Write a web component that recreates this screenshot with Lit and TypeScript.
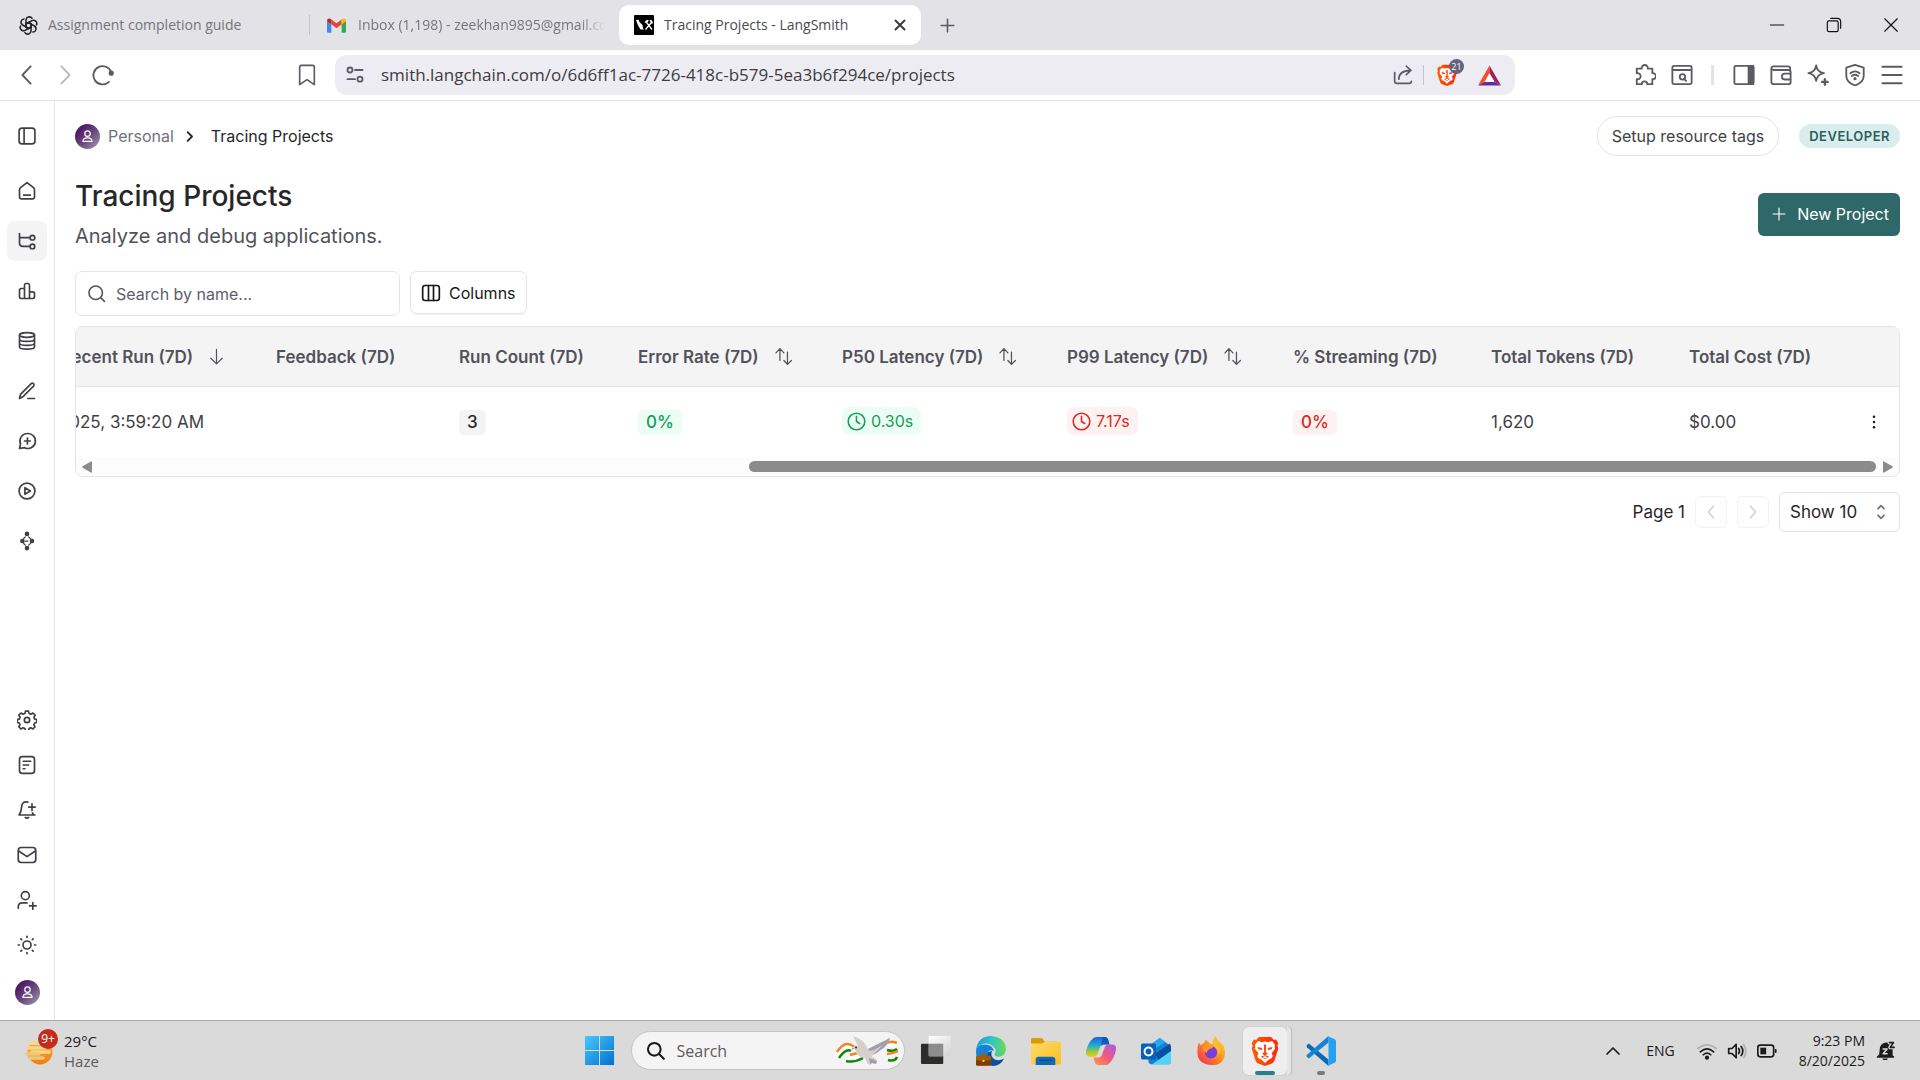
import { LitElement, html, css, svg, nothing, TemplateResult } from "lit";
import { customElement } from "lit/decorators.js";

/* Outline icon on a 24-unit grid. */
const icon = (body: unknown, size = 22, stroke = 2) => html`<svg
  width=${size} height=${size} viewBox="0 0 24 24" fill="none" stroke="currentColor"
  stroke-width=${stroke} stroke-linecap="round" stroke-linejoin="round" aria-hidden="true">${body}</svg>`;

/* Filled artwork on a 32-unit grid. */
const art = (body: unknown, size = 30, box = "0 0 32 32") => html`<svg
  width=${size} height=${size} viewBox=${box} aria-hidden="true">${body}</svg>`;

const lion = (id: string) => svg`
  <defs><linearGradient id=${id} x1="0" x2="1"><stop offset="0" stop-color="#ff5a00"/><stop offset="1" stop-color="#ff2a10"/></linearGradient></defs>
  <path fill="url(#${id})" d="M9.500 1h13l3 3.200 2.400-.4 2.300 3.800-1 2.600 1 3-4.200 13.200q-.6 1.600-2 2.600L16 32l-8-3q-1.400-1-2-2.600L1.800 13.200l1-3-1-2.600L4.100 3.800l2.400.4z"/>
  <path fill="#fff" d="M16 5.800l3.400.9 4.100-1.300 3.300 4.200-.6 2.100.7 1.700-3.900 5 1.200 2.700-.6 2.200-3.900 1.900-3.700 3.600-3.700-3.600-3.900-1.900-.6-2.200L9 18.400l-3.900-5 .7-1.700-.6-2.100 3.300-4.200 4.100 1.300z"/>
  <path fill="#ff4214" d="M8 11.600l5.200 1.200-.6 2.200-3.600-.8zM24 11.600l-5.200 1.200.6 2.200 3.600-.8zM14.700 9h2.600l-.4 8.200 2.300 1.800-3.200 1.900-3.200-1.900 2.300-1.800zM11.500 21.800l4.500-1.400 4.500 1.400-4.500 3z"/>
  <path fill="#fff" d="M13.600 22.400l2.400-.8 2.400.8-2.400 1.600z"/>`;

const person = svg`<circle cx="12" cy="8" r="3.800"/><path d="M5.500 19c0-3.400 2.800-5.200 6.500-5.200s6.500 1.800 6.500 5.200z"/>`;

const avatarStyle = css`
  .avatar {
    display: inline-flex; align-items: center; justify-content: center;
    width: 25px; height: 25px; border-radius: 50%; color: #fff; flex: none;
    background: linear-gradient(135deg, #4f1a68 20%, #6b4b7e 55%, #a79fae 100%);
  }`;

const base = css`
  :host, * { box-sizing: border-box; }
  button, input, select { font: inherit; color: inherit; margin: 0; padding: 0; border: 0; background: none; outline: none; }
  a { color: inherit; text-decoration: none; }
  svg { display: block; flex: none; }
`;

@customElement("browser-chrome")
export class BrowserChrome extends LitElement {
  static styles = [base, css`
    :host { display: block; font-family: "Noto Sans", "Open Sans", sans-serif; color: #5b5c63; }
    .tabs { display: flex; align-items: center; height: 50px; background: #e3e2e7; padding: 0 15px 0 9px; }
    .tab { display: flex; align-items: center; gap: 10px; height: 40px; font: 14px/20px "Open Sans", sans-serif; color: #75757c; padding: 0 10px; flex: 0 1 auto; }
    .tab.first { width: 300px; }
    .tab.first svg { color: #222226; }
    .tab.mail { width: 309px; padding: 0 14px 0 17px; gap: 12px; }
    .tab.active { width: 302px; background: #fff; border-radius: 10px; color: #4a4b52; padding: 0 12px 0 15px; }
    .split { width: 1px; height: 20px; background: #c4c3c9; }
    .title { flex: 1; white-space: nowrap; overflow: hidden; }
    .mail .title { mask-image: linear-gradient(90deg, #000 90%, transparent); }
    .close { color: #36373c; display: flex; }
    .new { margin-left: 17px; display: flex; }
    .window { margin-left: auto; display: flex; gap: 37px; color: #111; align-items: center; padding-right: 4px; }
    .bar { display: flex; align-items: center; height: 51px; background: #fff; border-bottom: 1px solid #e3e2e7; }
    .left { width: 335px; display: flex; gap: 2px; padding: 0 10px 0 9px; }
    .right { width: 405px; display: flex; gap: 1px; justify-content: flex-end; align-items: center; padding-right: 10px; }
    .ib { width: 36px; height: 36px; display: flex; align-items: center; justify-content: center; }
    .ib.off { color: #b9b9be; }
    .ib.mark { margin-left: auto; }
    .url { flex: 1; height: 40px; display: flex; align-items: center; background: #edecf2; border-radius: 12px; padding: 0 14px 0 10px; }
    .url form { flex: 1; display: flex; margin: 0 16px; }
    .url input { width: 100%; font: 17px/24px "Open Sans", sans-serif; color: #3c3c42; }
    .sep { width: 1px; height: 20px; background: #c4c3c9; margin: 0 12px 0 10px; }
    .sep.wide { width: 3px; background: #e3e2e7; margin: 0 11px 0 10px; }
    .shield { position: relative; margin-right: 20px; }
    .count { position: absolute; left: 13px; top: -5px; width: 15px; height: 15px; border-radius: 50%; background: #63657a; color: #fff; font: 9px/15px "Open Sans", sans-serif; text-align: center; }
  `];

  render() {
    return html`
      <div class="tabs">
        <div class="tab first">
          ${icon(svg`${[0, 60, 120, 180, 240, 300].map(a => svg`<path transform="rotate(${a} 12 12)" d="M12 8.200L8.800 10V5.200a4.200 4.200 0 0 1 7.600-2.300M12 8.200l3.300 1.900"/>`)}`, 19, 1.900)}
          <span class="title">Assignment completion guide</span>
        </div>
        <span class="split"></span>
        <div class="tab mail">
          <svg width="19" height="15" viewBox="0 0 24 18" aria-hidden="true">
            <path fill="#4285f4" d="M0 3v13.500Q0 18 1.600 18H5.500V7z"/><path fill="#34a853" d="M24 3v13.500q0 1.500-1.600 1.500H18.500V7z"/>
            <path fill="#ea4335" d="M5.500 7.500V1.400L12 6.300l6.500-4.900v6.100L12 12.400z"/>
            <path fill="#c5221f" d="M0 3Q0 0 2.600 0 4 .2 5.500 1.400v6.100L0 3.400z"/><path fill="#fbbc04" d="M24 3q0-3-2.600-3-1.400.2-2.900 1.400v6.100L24 3.400z"/>
          </svg>
          <span class="title">Inbox (1,198) - zeekhan9895@gmail.com</span>
        </div>
        <div class="tab active">
          <svg width="20" height="20" viewBox="0 0 20 20" aria-hidden="true"><rect width="20" height="20" rx="1"/>
            <path fill="#fff" d="M2 5l2.500-.3 1 2.300 3 3 .5 3.500 1 1H6.500L3.800 10z"/>
            <path stroke="#fff" stroke-width="1.300" d="M11.500 14.500l6-7M13 8l5 6.500"/><path fill="#fff" d="M10.500 7l2.500-2.300 2 .8-2.500 3zM15.500 5h2l1.800 3.200-2 .3z"/></svg>
          <span class="title">Tracing Projects - LangSmith</span>
          <button class="close" aria-label="Close tab">${icon(svg`<path d="M6 6l12 12M18 6L6 18"/>`, 18, 2.500)}</button>
        </div>
        <button class="new" aria-label="New tab">${icon(svg`<path d="M12 4v16M4 12h16"/>`, 19, 2)}</button>
        <div class="window">
          <button aria-label="Minimize">${icon(svg`<path d="M4 12h16"/>`, 20, 1.300)}</button>
          <button aria-label="Restore">${icon(svg`<rect x="4" y="7" width="13" height="13" rx="2"/><path d="M8 4h8q4 0 4 4v8"/>`, 20, 1.400)}</button>
          <button aria-label="Close window">${icon(svg`<path d="M4.500 4.500l15 15M19.500 4.500l-15 15"/>`, 20, 1.400)}</button>
        </div>
      </div>
      <div class="bar">
        <div class="left">
          <button class="ib" aria-label="Back">${icon(svg`<path d="M16 2.500L7 12l9 9.500"/>`)}</button>
          <button class="ib off" aria-label="Forward">${icon(svg`<path d="M8 2.500l9 9.500-9 9.500"/>`)}</button>
          <button class="ib" aria-label="Reload">${icon(svg`<path d="M18.500 19.500A10 10 0 1 1 21 9"/><circle cx="21" cy="10" r="1.800" fill="currentColor"/>`)}</button>
          <button class="ib mark" aria-label="Bookmark">${icon(svg`<path d="M4 3.500Q4 1.500 6 1.500h12q2 0 2 2v19L12 17l-8 5.500z"/>`, 22, 1.800)}</button>
        </div>
        <div class="url">
          ${icon(svg`<circle cx="6" cy="6" r="3"/><path d="M12 6h9M3 17h9"/><circle cx="18" cy="17" r="3"/>`, 20, 2.200)}
          <form><input aria-label="Address" value="smith.langchain.com/o/6d6ff1ac-7726-418c-b579-5ea3b6f294ce/projects" /></form>
          ${icon(svg`<path d="M2 9v10.500Q2 22 4.500 22h15q2.500 0 2.500-2.500M7 17q0-10 14-10.500M16 1.500l5.500 5-5.500 5"/>`, 20, 2)}
          <span class="sep"></span>
          <span class="shield">${art(lion("lionbar"), 22)}<span class="count">21</span></span>
          ${art(svg`<path fill="#ff4724" d="M16 2L0 30l9-5 7-12z"/><path fill="#9e1f63" d="M16 2l16 28-9-5-7-12z"/><path fill="#662d91" d="M0 30h32l-9-5H9z"/><path fill="#fff" d="M16 13l7 12H9z"/>`, 23)}
        </div>
        <div class="right">
          <button class="ib" aria-label="Extensions">${icon(svg`<path d="M3 5h5.500a3.300 3.300 0 1 1 6.500 0H20v5a3.300 3.300 0 1 1 0 6.500V22h-5.500a3 3 0 1 0-6 0H3v-5.500a3.300 3.300 0 1 0 0-6.300z"/>`, 22)}</button>
          <button class="ib" aria-label="Search tabs">${icon(svg`<rect x="1.500" y="2" width="21" height="20" rx="2"/><path d="M2 6.500h20M14.500 16.500l2 2"/><circle cx="12.500" cy="14" r="3"/>`)}</button>
          <span class="sep wide"></span>
          <button class="ib" aria-label="Side panel">${icon(svg`<rect x="1.500" y="2" width="21" height="20" rx="1.500"/><path fill="currentColor" d="M17 2h5v20h-5z"/>`)}</button>
          <button class="ib" aria-label="Wallet">${icon(svg`<path d="M22 8V5Q22 2.500 19.500 2.500H4Q1.500 2.500 1.500 5v14Q1.500 22 4 22h16q2.500 0 2.500-2.500V8.500Q22 6.500 20 6.500H4Q2 6.500 1.500 5M22 10.500h-6q-3 0-3 3.200t3 3.200h6"/>`)}</button>
          <button class="ib" aria-label="Assistant">${icon(svg`<path d="M10 1.500q1 7.500 8.500 8.500-7.500 1-8.500 8.500Q9 11 1.500 10 9 9 10 1.500z"/><path d="M19.500 16.500v6M16.500 19.500h6" stroke-width="2.600"/>`)}</button>
          <button class="ib" aria-label="VPN">${icon(svg`<path d="M12 1l9.500 3v9q0 6.500-9.500 10.500Q2.500 19.500 2.500 13V4z"/><path d="M7 10q5-4 10 0M8.500 13q3.500-2.500 7 0"/><circle cx="12" cy="16" r=".8"/>`)}</button>
          <button class="ib" aria-label="Menu">${icon(svg`<path d="M1.500 3h21M1.500 12h21M1.500 21h21"/>`)}</button>
        </div>
      </div>`;
  }
}

const topNav: [string, TemplateResult][] = [
  ["Home", svg`<path d="M3 10.500Q3 9 4.200 8L12 2l7.800 6Q21 9 21 10.500V19q0 2.500-2.500 2.500h-13Q3 21.500 3 19zM8 17h8"/>`],
  ["Tracing", svg`<path d="M3 3v11.500Q3 18.500 7 18.500h8M3 8h12"/><circle cx="18.500" cy="8" r="2.800"/><circle cx="18.500" cy="18.500" r="2.800"/>`],
  ["Monitoring", svg`<path d="M9 21V5q0-2 1.500-2h3Q15 3 15 5v16M9 9H5Q3 9 3 11v8q0 2 2 2h14q2 0 2-2v-4q0-2-2-2h-4"/>`],
  ["Datasets", svg`<ellipse cx="12" cy="4.800" rx="9" ry="2.800"/><path d="M3 5v14c0 1.600 4 2.800 9 2.800s9-1.200 9-2.800V5M3 9.700c0 1.600 4 2.800 9 2.800s9-1.200 9-2.800M3 14.400c0 1.600 4 2.800 9 2.800s9-1.200 9-2.800"/>`],
  ["Annotation", svg`<path d="M3 21l1.200-5L17 3.200q1.400-1.200 2.800 0 1.400 1.500 0 3L7.500 18.500zM13 21h8"/>`],
  ["Prompts", svg`<path d="M12.500 3A9 9 0 1 1 9 20l-6 1 1.200-5.500A9 9 0 0 1 12.500 3zM12.500 8.500v7M9 12h7"/>`],
  ["Playground", svg`<circle cx="12" cy="12" r="9.500"/><path d="M9.500 8v8l6.500-4z"/>`],
  ["Graph", svg`<g fill="currentColor"><circle cx="12" cy="3.500" r="1.800"/><circle cx="12" cy="20.500" r="1.800"/><circle cx="6.500" cy="12" r="1.800"/><circle cx="18" cy="12" r="1.800"/></g><path d="M10 7L8 9M14 7l2.500 2.500M10 17l-2-2M14 17l2.500-2.500M10 12h3" stroke-width="1.500"/>`],
];
const spokes = Array.from({ length: 8 }, (_, i) => i * 45);
const bottomNav: [string, TemplateResult][] = [
  ["Settings", svg`<circle cx="12" cy="12" r="3.200"/><path d="M10.200 1.300h3.600l.7 2.900 2.200.9 2.500-1.500 2.600 2.600-1.500 2.500.9 2.200 2.600.7v3.200l-2.700.8-.9 2.100 1.400 2.600-2.500 2.500-2.500-1.400-2.200.9-.6 2.700h-3.600l-.7-2.700-2.200-.9-2.500 1.400-2.600-2.600 1.400-2.500-.9-2-2.400-.9v-3.200l2.500-.7.9-2.200-1.500-2.500 2.600-2.600 2.500 1.500 2.200-.9z"/>`],
  ["Docs", svg`<rect x="3" y="2" width="18" height="20" rx="3.500"/><path d="M7.500 7.500h9M7.500 12h6.500M7.500 16.500h2"/>`],
  ["Notifications", svg`<path d="M13 2.500q-7-1.500-7.500 6-.2 5.500-3 9.500h19M10 21q2 1.500 4 0M18 4.500v8M14 8.500h8M18.500 15.500l1.500 2"/>`],
  ["Inbox", svg`<rect x="1.500" y="3" width="21" height="18" rx="3.500"/><path d="M2.500 7.500L12 14l9.500-6.500"/>`],
  ["Invite", svg`<circle cx="10" cy="6.800" r="4.800"/><path d="M1.500 22v-1.500q0-5 5-5H12M19 15v8M15 19h8"/>`],
  ["Theme", svg`<circle cx="12" cy="12" r="4.800"/>${spokes.map(a => svg`<path transform="rotate(${a} 12 12)" d="M12 1.500v1.500"/>`)}`],
];

@customElement("app-sidebar")
export class AppSidebar extends LitElement {
  static styles = [base, avatarStyle, css`
    :host { display: flex; flex-direction: column; justify-content: space-between; width: 55px; flex: none; border-right: 1px solid #e4e4e7; padding: 15px 7px 8px; color: #3f3f46; }
    nav { display: flex; flex-direction: column; gap: 10px; }
    nav.foot { gap: 5px; }
    .item { width: 40px; height: 40px; display: flex; align-items: center; justify-content: center; border-radius: 8px; }
    .item.on { background: #f4f4f5; }
    .toggle { margin-bottom: 5px; }
    .me { margin-top: 2px; }
  `];
  render() {
    return html`
      <nav aria-label="Main">
        <button class="item toggle" aria-label="Toggle sidebar">${icon(svg`<rect x="2.500" y="2.500" width="19" height="19" rx="3.500"/><path d="M8.500 3v18"/>`, 20)}</button>
        ${topNav.map(([name, body]) => html`<a class="item ${name === "Tracing" ? "on" : ""}" href="#" aria-label=${name}>${icon(body, 20)}</a>`)}
      </nav>
      <nav class="foot" aria-label="Account">
        ${bottomNav.map(([name, body]) => html`<a class="item" href="#" aria-label=${name}>${icon(body, 20)}</a>`)}
        <button class="item me" aria-label="Profile"><span class="avatar">${icon(person, 17, 1.700)}</span></button>
      </nav>`;
  }
}

type Column = { label: string; width: number; sort?: "desc" | "both"; cell: unknown };
const clock = icon(svg`<circle cx="12" cy="12" r="10.500"/><path d="M12 5.500V12l4 2.500"/>`, 19);
const columns: Column[] = [
  { label: "Most Recent Run (7D)", width: 261, sort: "desc", cell: "8/20/2025, 3:59:20 AM" },
  { label: "Feedback (7D)", width: 183, cell: nothing },
  { label: "Run Count (7D)", width: 179, cell: html`<span class="pill gray">3</span>` },
  { label: "Error Rate (7D)", width: 204, sort: "both", cell: html`<span class="pill green">0%</span>` },
  { label: "P50 Latency (7D)", width: 225, sort: "both", cell: html`<span class="pill time green">${clock}0.30s</span>` },
  { label: "P99 Latency (7D)", width: 226, sort: "both", cell: html`<span class="pill time red">${clock}7.17s</span>` },
  { label: "% Streaming (7D)", width: 198, cell: html`<span class="pill red">0%</span>` },
  { label: "Total Tokens (7D)", width: 198, cell: "1,620" },
  { label: "Total Cost (7D)", width: 179, cell: "$0.00" },
];

@customElement("projects-page")
export class ProjectsPage extends LitElement {
  static styles = [base, avatarStyle, css`
    :host { display: block; flex: 1; min-width: 0; padding: 15px 20px; font: 17px/24px Inter, sans-serif; color: #27272a; }
    .row { display: flex; align-items: center; }
    .crumbs { height: 40px; font-size: 16px; gap: 8px; }
    .crumbs .muted { color: #71717a; }
    .crumbs .here { margin-left: 6px; }
    .tags { margin-left: auto; height: 40px; padding: 0 14px; border: 1px solid #e4e4e7; border-radius: 20px; color: #3f3f46; }
    .plan { margin-left: 12px; height: 24px; border-radius: 12px; padding: 0 10px; background: #d9eeec; color: #2b5f5f; font: 600 13px/24px Inter, sans-serif; letter-spacing: 0.5px; }
    .head { margin-top: 22px; justify-content: space-between; }
    h1 { margin: 0; font: 500 28px/36px Inter, sans-serif; }
    .sub { margin: 8px 0 0; font-size: 20px; line-height: 28px; color: #52525b; }
    .new { display: flex; align-items: center; gap: 10px; height: 43px; padding: 0 11px 0 13px; background: #2f6868; color: #fff; border-radius: 6px; font-size: 16px; }
    .tools { margin-top: 21px; gap: 10px; align-items: flex-start; }
    .search { display: flex; align-items: center; gap: 10px; width: 325px; height: 45px; border: 1px solid #e4e4e7; border-radius: 7px; padding: 0 11px; color: #52525b; }
    .search input { flex: 1; min-width: 0; font-size: 16px; }
    .search input::placeholder { color: #60606a; opacity: 1; }
    .cols { display: flex; align-items: center; gap: 8px; height: 43px; padding: 0 10px; border: 1px solid #e4e4e7; border-radius: 7px; box-shadow: 0 1px 2px #0000000d; color: #18181b; font-size: 16px; }
    .card { margin-top: 10px; border: 1px solid #e4e4e7; border-radius: 8px; overflow: hidden; }
    .scroller { display: flex; justify-content: flex-end; overflow: hidden; }
    table { border-collapse: separate; border-spacing: 0; table-layout: fixed; width: 1904px; flex: none; }
    th { height: 60px; padding: 0 20px; text-align: left; font-weight: 600; color: #52525b; white-space: nowrap; border-bottom: 1px solid #e4e4e7; background: #f4f4f5; }
    th .lab { display: inline-flex; align-items: center; gap: 15px; }
    td { height: 70px; padding: 0 20px; white-space: nowrap; color: #3f3f46; }
    td.act { padding: 0; }
    .more { display: flex; margin: 0 auto; color: #18181b; }
    .pill { display: inline-flex; align-items: center; gap: 5px; height: 25px; padding: 0 8px; border-radius: 5px; font-weight: 500; }
    .pill.time { height: 28px; padding: 0 8px 0 5px; border-radius: 7px; font-weight: 400; font-size: 16px; }
    .gray { background: #f4f4f5; color: #27272a; }
    .green { background: #ecfdf3; color: #12a05a; }
    .red { background: #fef1f1; color: #d92d20; }
    .track { display: flex; align-items: center; gap: 7px; height: 19px; padding: 0 6px; background: #fcfcfc; }
    .rail { flex: 1; display: flex; justify-content: flex-end; }
    .thumb { width: 63.4%; height: 11px; border-radius: 6px; background: #8b8b8b; }
    .pager { margin-top: 15px; justify-content: flex-end; gap: 10px; }
    .step { width: 32px; height: 32px; display: flex; align-items: center; justify-content: center; border: 1px solid #f1f1f3; border-radius: 6px; color: #cfcfd4; }
    .size { position: relative; display: flex; align-items: center; }
    .size select { appearance: none; width: 121px; height: 40px; border: 1px solid #e4e4e7; border-radius: 6px; padding: 0 10px; }
    .size svg { position: absolute; right: 10px; color: #71717a; pointer-events: none; }
  `];

  private sortIcon(kind?: "desc" | "both") {
    if (kind === "desc") return icon(svg`<path d="M12 2v20M4 14.500l8 8 8-8"/>`, 17, 1.700);
    if (kind === "both") return icon(svg`<path d="M7.500 17V2.500M2.500 7.500l5-5.500 5 5.500M17 6.500v15M12.500 17l4.500 5 5-5"/>`, 19, 1.600);
    return nothing;
  }

  render() {
    return html`
      <header class="row crumbs">
        <span class="avatar">${icon(person, 17, 1.700)}</span>
        <a class="muted" href="#">Personal</a>
        ${icon(svg`<path d="M9 5l7 7-7 7"/>`, 15, 3)}
        <a class="here" href="#">Tracing Projects</a>
        <button class="tags">Setup resource tags</button>
        <span class="plan">DEVELOPER</span>
      </header>
      <div class="row head">
        <div><h1>Tracing Projects</h1><p class="sub">Analyze and debug applications.</p></div>
        <button class="new">${icon(svg`<path d="M12 3v18M3 12h18"/>`, 16, 1.700)}New Project</button>
      </div>
      <div class="row tools">
        <label class="search">${icon(svg`<circle cx="11" cy="11" r="8.500"/><path d="M17.500 17.500L22 22"/>`, 19)}<input type="search" aria-label="Search by name" placeholder="Search by name..." /></label>
        <button class="cols">${icon(svg`<rect x="2" y="3" width="20" height="18" rx="3"/><path d="M9 3v18M15 3v18"/>`, 20)}Columns</button>
      </div>
      <section class="card">
        <div class="scroller">
          <table>
            <colgroup>${columns.map(c => html`<col style="width:${c.width}px" />`)}<col /></colgroup>
            <thead><tr>${columns.map(c => html`<th scope="col"><span class="lab">${c.label}${this.sortIcon(c.sort)}</span></th>`)}<th></th></tr></thead>
            <tbody><tr>${columns.map(c => html`<td>${c.cell}</td>`)}<td class="act"><button class="more" aria-label="Row actions">${icon(svg`<g fill="currentColor" stroke="none"><circle cx="12" cy="4" r="1.900"/><circle cx="12" cy="12" r="1.900"/><circle cx="12" cy="20" r="1.900"/></g>`, 16)}</button></td></tr></tbody>
          </table>
        </div>
        <div class="track">
          <svg width="10" height="12" viewBox="0 0 10 12" aria-hidden="true"><path fill="#8b8b8b" d="M10 1v10q0 1-1 .6L1 7Q-.5 6 1 5L9 .4Q10 0 10 1z"/></svg>
          <div class="rail"><div class="thumb"></div></div>
          <svg width="10" height="12" viewBox="0 0 10 12" aria-hidden="true"><path fill="#8b8b8b" d="M0 1v10q0 1 1 .6L9 7q1.500-1 0-2L1 .4Q0 0 0 1z"/></svg>
        </div>
      </section>
      <div class="row pager">
        <span>Page 1</span>
        <button class="step" aria-label="Previous page">${icon(svg`<path d="M15.500 4l-7 8 7 8"/>`, 18)}</button>
        <button class="step" aria-label="Next page">${icon(svg`<path d="M8.500 4l7 8-7 8"/>`, 18)}</button>
        <span class="size"><select aria-label="Page size"><option>Show 10</option></select>
          ${icon(svg`<path d="M8 7.500l4-4 4 4M8 16.500l4 4 4-4"/>`, 18, 2.200)}</span>
      </div>`;
  }
}

@customElement("task-bar")
export class TaskBar extends LitElement {
  static styles = [base, css`
    :host { display: grid; grid-template-columns: 1fr auto 1fr; align-items: center; height: 60px; border-top: 1px solid #a9a9a9; background: #dadada; font: 15px/20px "Open Sans", sans-serif; color: #1b1b1b; }
    .weather { display: flex; align-items: center; gap: 4px; padding-left: 24px; text-align: left; }
    .sun { position: relative; width: 36px; height: 40px; display: flex; align-items: center; }
    .nine { position: absolute; left: 14px; top: -2px; width: 20px; height: 20px; border-radius: 50%; background: #c42b1c; color: #fff; font: 12px/19px "Open Sans", sans-serif; text-align: center; }
    .dim { color: #5c5c5c; }
    .apps { display: flex; align-items: center; gap: 7px; height: 59px; }
    .app { width: 48px; height: 48px; display: flex; align-items: center; justify-content: center; position: relative; border-radius: 5px; }
    .app.on { background: #eeeeee; box-shadow: 0 0 1px #999; width: 44px; margin: 0 3px 0 1px; }
    .app.on::after, .app.run::after { content: ""; position: absolute; bottom: 0; height: 4px; border-radius: 2px; background: #267f90; width: 20px; }
    .app.on::before { content: ""; position: absolute; right: -4px; top: 0; width: 4px; height: 48px; border-radius: 0 5px 5px 0; background: #e6e6e6; box-shadow: 1px 0 1px #bbb; }
    .app.run::after { width: 8px; background: #7a7a7a; }
    .find { display: flex; align-items: center; gap: 12px; width: 274px; height: 39px; border-radius: 20px; border: 1px solid #c4c4c4; background: #f4f4f4; padding: 0 5px 0 14px; }
    .find input { flex: 1; min-width: 0; font-size: 16px; }
    .find input::placeholder { color: #5c5c5c; opacity: 1; }
    .tray { display: flex; align-items: center; justify-content: flex-end; padding-right: 25px; }
    .tray .lang { font-size: 14px; margin: 0 22px 0 24px; }
    .sys { display: flex; gap: 10px; margin-right: 22px; }
    .time { text-align: right; margin-right: 11px; font-size: 14px; }
  `];

  render() {
    return html`
      <button class="weather">
        <span class="sun"><svg width="30" height="30" viewBox="0 0 30 30" aria-hidden="true">
          <defs><linearGradient id="wx" x1="0" y1="0" x2="0" y2="1"><stop offset="0" stop-color="#fbb040"/><stop offset="1" stop-color="#f07d12"/></linearGradient></defs>
          <circle cx="16" cy="16" r="12.500" fill="url(#wx)"/><path fill="#dadada" d="M0 0h19v9H0z"/>
          <g stroke-linecap="round" stroke-width="3.500"><path stroke="#fbd98a" d="M7 7h5"/><path stroke="#f6d586" d="M4 12h17M8 16h17"/><path stroke="#ecc878" d="M3 18h12M6 22h13"/></g></svg><span class="nine">9+</span></span>
        <span>29°C<br /><span class="dim">Haze</span></span>
      </button>
      <div class="apps">
        <button class="app" aria-label="Start">${art(svg`<defs><linearGradient id="win" x1="0" y1="0" x2="1" y2="1"><stop offset="0" stop-color="#4cc8fb"/><stop offset="1" stop-color="#0070d0"/></linearGradient></defs><path fill="url(#win)" d="M1 1h14.500v14.500H1zM16.500 1H31v14.500H16.500zM1 16.500h14.500V31H1zM16.500 16.500H31V31H16.500z"/>`, 31)}</button>
        <label class="find">${icon(svg`<circle cx="10.500" cy="10.500" r="8"/><path d="M16.500 16.500l6 6"/>`, 19, 2.600)}
          <input aria-label="Search" placeholder="Search" />
          <svg width="63" height="32" viewBox="0 0 63 32" fill="none" aria-hidden="true">
            <g stroke-width="2.500"><path stroke="#f58220" d="M1 17Q8 6 15 10t11 5"/><path stroke="#fff" d="M2 20Q9 9 15 13t9 5"/><path stroke="#138808" d="M3 23q7-10 12-7M10 26q8 2 17-3"/><path stroke="#fff" d="M12 23q6 0 13-3"/><path stroke="#f58220" d="M14 20l11-3M49 9q5-4 12-1"/><path stroke="#fff" d="M50 12q5-3 11-1"/><path stroke="#138808" d="M51 15q7 2 10-1M52 25q7 2 9-3"/><path stroke="#f58220" d="M51 19q5 0 11-3"/></g>
            <path fill="#d6d0cc" d="M16 13q2-3 6-2l-5-10q11 3 15 13l22-11q-2 7-8 11-5 5-11 7l6 4-1 4-4-1-2 2-3-2-2-5q-8-1-10-8z"/>
            <path fill="#a59dab" d="M32 14l22-11q-2 7-8 11-5 4-10 6 7-5 10-10-6 5-12 6zM33 23l8 3-1 3-4-1-2 1z"/><circle cx="20" cy="12.500" r="1" fill="#222"/><path fill="#ee7733" d="M16 13l2 .5-2 1.500z"/>
          </svg></label>
        <button class="app" aria-label="Task view">${art(svg`<defs><linearGradient id="tv" x1="0" y1="0" x2="1" y2="1"><stop offset="0" stop-color="#fff"/><stop offset="1" stop-color="#d2d2d2"/></linearGradient></defs><rect x="1" y="9" width="23" height="21" rx="1" fill="#2c2c2a"/><rect x="9" y="1" width="23" height="21" rx="1" fill="url(#tv)"/><path fill="#8d8d8d" d="M9 9h15v13H9z"/>`, 31)}</button>
        <button class="app" aria-label="Edge">${art(svg`<defs><linearGradient id="eg" x1="0" x2="1"><stop offset="0" stop-color="#1a9be0"/><stop offset=".55" stop-color="#35c6c0"/><stop offset="1" stop-color="#6bdc4c"/></linearGradient></defs>
          <path fill="#0d4f9e" d="M4 20q3 12 14 12 8 0 12-8-5 3-10 1-5-3-3-9z"/><path fill="#1484d8" d="M0 17Q0 9 9 9q9 0 10 7-4-2-6 1-2 5 3 10-5 4-10 2-6-4-6-12z"/>
          <path fill="url(#eg)" d="M0 15Q2 0 16 0q15 1 16 14-1 8-8 8-5 0-4-3 2-3 0-6Q17 8 10 8 3 8 0 15z"/><rect y="21" width="16" height="11" rx="1.500" fill="#a45a08"/><path fill="#7a3e04" d="M0 26h16v5H0z"/><path stroke="#a45a08" stroke-width="1.500" fill="none" d="M5 21v-1.500h6V21"/><circle cx="8" cy="26.500" r="1.300" fill="#ffc83d"/>`)}</button>
        <button class="app" aria-label="Files">${art(svg`<defs><linearGradient id="fd" x1="0" y1="0" x2="1" y2="1"><stop offset="0" stop-color="#ffdb66"/><stop offset="1" stop-color="#fdbe22"/></linearGradient></defs><path fill="#dc9a08" d="M0 3.500Q0 2 1.500 2h9q1 0 2 1l2 3H28v8H0z"/><path fill="url(#fd)" d="M0 8h12l3-2h16q1 0 1 1v23H0z"/><path fill="#1069b8" d="M5 31v-6q0-3 3-3h15q3 0 3 3v6z"/><path stroke="#084a8c" stroke-width="1.200" d="M9 26h14"/>`)}</button>
        <button class="app" aria-label="Copilot">${art(svg`<defs><linearGradient id="ca" x1="0" y1="0" x2="0" y2="1"><stop offset="0" stop-color="#1b62d8"/><stop offset=".4" stop-color="#1ea5d5"/><stop offset=".75" stop-color="#93cf3a"/><stop offset="1" stop-color="#f8c31f"/></linearGradient><linearGradient id="cb" x1="0" y1="1" x2="1" y2="0"><stop offset="0" stop-color="#ff9e45"/><stop offset=".5" stop-color="#f2597c"/><stop offset="1" stop-color="#a35bf2"/></linearGradient></defs>
          <path fill="url(#ca)" d="M8 2q2-1 4-1h8q3 0 4 4l1 4h-6q-3 0-4 3l-3 8q-1 2-4 2H4q-5 0-4-6Q2 7 8 2z"/><path fill="url(#cb)" d="M24 30q-2 1-4 1h-7q-3 0-4-4l-1-4h5q3 0 4-3l3-8q1-3 4-3h4q5 0 4 6-2 10-8 15z"/><path fill="#1048b5" d="M18 1h2q3 0 4 4l1 4h-6q-2 0-3 2z" opacity=".75"/>`)}</button>
        <button class="app" aria-label="Outlook">${art(svg`<path fill="#1380d0" d="M8 11L20 2l12 9v16q0 3-3 3H11q-3 0-3-3z"/><path fill="#28a8ea" d="M8 11l12-9 6 4.500-14 9z"/><path fill="#0a4ea3" d="M15 19L31 8l1 4v5L19 26z"/><path fill="#4fd4f5" d="M32 16v11q0 3-3 3H12z"/><rect y="8" width="16" height="17" rx="1.500" fill="#0a5fb8"/><circle cx="8" cy="16.500" r="4.200" fill="none" stroke="#fff" stroke-width="2.200"/>`)}</button>
        <button class="app" aria-label="Firefox">${art(svg`<defs><linearGradient id="ff" x1="1" y1="0" x2="0" y2="1"><stop offset="0" stop-color="#ffe13b"/><stop offset=".5" stop-color="#ff8a1f"/><stop offset="1" stop-color="#f0245c"/></linearGradient></defs><path fill="url(#ff)" d="M3 7l2 3 4-3 1-3q3 1 5 4l3 1q-1-5 3-9 1 4 5 7 5 4 5 11-1 13-14 13Q2 30 1.500 18 1 12 3 7z"/><circle cx="16" cy="17.500" r="6.500" fill="#7a3be0"/><path fill="#ff9a1f" d="M7 11q4-3 8-1l4 1q-2 3-5 3-3 2-2 4-5-1-5-7z"/><path fill="#ffbd2e" d="M20 2q2 5 5 8 3 5-1 10 0-7-6-10 0-5 2-8z"/>`)}</button>
        <button class="app on" aria-label="Brave">${art(lion("liontask"))}</button>
        <button class="app run" aria-label="Code">${art(svg`<path fill="#0a6ab6" d="M1 9.500l2-1.500 21 17v7L1 12q-1-1 0-2.500z"/><path fill="#1485d0" d="M1 22.500l2 1.500L24 7V0L1 20q-1 1 0 2.500z"/><path fill="#26a1f2" d="M23 0l7.500 3.500Q32 4 32 6v20q0 2-1.500 2.500L23 32q1-1 1-3V3q0-2-1-3z"/>`)}</button>
      </div>
      <div class="tray">
        <button aria-label="Show hidden icons">${icon(svg`<path d="M4 16l8-8 8 8"/>`, 18, 2.300)}</button>
        <span class="lang">ENG</span>
        <span class="sys">
          ${icon(svg`<path stroke="#b0b0b0" d="M1 9q11-9 22 0"/><path d="M4 13q8-7 16 0M7.500 16.500q4.500-4 9 0"/><circle cx="12" cy="20" r="1.500" fill="currentColor"/>`, 20)}
          ${icon(svg`<path d="M2 9h4l5-5v16l-5-5H2zM14 9q2 3 0 6M17 6.500q4 5.500 0 11"/><path stroke="#b0b0b0" d="M20 4q5 8 0 16"/>`, 20)}
          ${icon(svg`<rect x="1" y="5" width="19" height="14" rx="3"/><path d="M22.500 10.500v3"/><path fill="currentColor" stroke="none" d="M4 8h7v8H4z"/>`, 20)}
        </span>
        <span class="time">9:23 PM<br />8/20/2025</span>
        ${icon(svg`<path fill="currentColor" stroke="none" d="M5 8Q7 2 14 2l7 1v15l2 2v1H1v-1l3-3zM8 22h7q-1 2.500-3.500 2.500T8 22z"/><path stroke="#dadada" d="M9 10h5l-5 6h5"/><path stroke="#dadada" stroke-width="5" d="M17 2h5l-4 6h5"/><path d="M17 2h5l-4 6h5"/>`, 19)}
      </div>`;
  }
}

@customElement("app-root")
export class AppRoot extends LitElement {
  static styles = css`
    :host { display: flex; flex-direction: column; min-height: 100vh; background: #fff; }
    main { flex: 1; display: flex; }
  `;
  render() {
    return html`<browser-chrome></browser-chrome><main><app-sidebar></app-sidebar><projects-page></projects-page></main><task-bar></task-bar>`;
  }
}
